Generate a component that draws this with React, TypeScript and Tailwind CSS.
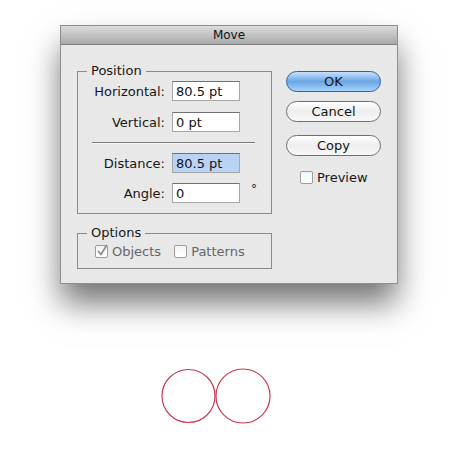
import React from 'react'

const font = { fontFamily: '"DejaVu Sans", "Liberation Sans", sans-serif' }

function Field({ label, value, selected, unit }: { label: string; value: string; selected?: boolean; unit?: string }) {
  return (
    <div className="flex items-center">
      <span className="w-[87px] text-right text-[13px] leading-none text-[#161616]">{label}</span>
      <div
        className={`ml-[7px] flex h-[20px] w-[68px] items-center border border-[#a6a6a6] border-t-[#707070] pl-[3px] text-[13px] leading-none text-[#111] ${
          selected ? 'bg-[#b9d3f5]' : 'bg-white'
        }`}
      >
        {value}
      </div>
      {unit && <span className="ml-[11px] -mt-[8px] text-[12px] leading-none text-[#222]">{unit}</span>}
    </div>
  )
}

function Check({ checked, label, disabled }: { checked?: boolean; label: string; disabled?: boolean }) {
  return (
    <div className="flex items-center">
      <div className="relative h-[13px] w-[13px] rounded-[2px] border border-[#9c9c9c] bg-gradient-to-b from-[#f4f4f4] to-[#ffffff]">
        {checked && (
          <svg className="absolute -left-[1px] -top-[3px]" width="15" height="15" viewBox="0 0 15 15">
            <path d="M3.5 8.5 L6 11.5 L11.5 2.5" fill="none" stroke="#8d8d8d" strokeWidth="1.8" strokeLinecap="round" strokeLinejoin="round" />
          </svg>
        )}
      </div>
      <span className={`ml-[4px] text-[13px] leading-none ${disabled ? 'text-[#666]' : 'text-[#161616]'}`}>{label}</span>
    </div>
  )
}

function AquaButton({ label, primary }: { label: string; primary?: boolean }) {
  return (
    <div
      className={`flex h-[21px] w-[95px] items-center justify-center rounded-full border text-[13px] leading-none text-[#151515] ${
        primary
          ? 'border-[#33609e] bg-gradient-to-b from-[#c8e1fb] via-[#6aa6e6] to-[#a6d3fb]'
          : 'border-[#6f6f6f] bg-gradient-to-b from-[#ffffff] via-[#eeeeee] to-[#f8f8f8]'
      }`}
    >
      {label}
    </div>
  )
}

export default function App() {
  return (
    <div className="flex min-h-[465px] w-[457px] flex-col bg-white pl-[61px] pt-[26px]" style={font}>
      {/* Move dialog */}
      <div className="w-[336px] bg-[#e8e8e8] shadow-[0_0_0_1px_#8e8e8e,0_20px_30px_rgba(0,0,0,0.55)]">
        <div className="flex h-[19px] items-center justify-center border-b border-[#7e7e7e] bg-gradient-to-b from-[#dcdcdc] to-[#a9a9a9] text-[12px] leading-none text-[#111]">
          Move
        </div>

        <div className="flex pl-[16px] pt-[19px] pb-[14px]">
          <div className="flex w-[195px] flex-col">
            {/* Position */}
            <fieldset className="border border-[#8a8a8a] px-0 pb-[10px]">
              <legend className="ml-[9px] px-[4px] text-[13px] leading-[14px] text-[#161616]">Position</legend>
              <div className="mt-[3px] flex flex-col">
                <Field label="Horizontal:" value="80.5 pt" />
                <div className="mt-[11px]">
                  <Field label="Vertical:" value="0 pt" />
                </div>
                <div className="ml-[14px] mt-[10px] w-[163px] border-t border-b border-t-[#7a7a7a] border-b-[#f6f6f6]" />
                <div className="mt-[9px]">
                  <Field label="Distance:" value="80.5 pt" selected />
                </div>
                <div className="mt-[10px]">
                  <Field label="Angle:" value="0" unit="°" />
                </div>
              </div>
            </fieldset>

            {/* Options */}
            <fieldset className="mt-[12px] border border-[#8a8a8a] px-0 pb-[10px]">
              <legend className="ml-[9px] px-[4px] text-[13px] leading-[14px] text-[#161616]">Options</legend>
              <div className="ml-[17px] mt-[5px] flex items-center">
                <Check checked label="Objects" disabled />
                <div className="ml-[13px]">
                  <Check label="Patterns" disabled />
                </div>
              </div>
            </fieldset>
          </div>

          <div className="ml-[14px] mt-[7px] flex flex-col">
            <AquaButton label="OK" primary />
            <div className="mt-[9px]">
              <AquaButton label="Cancel" />
            </div>
            <div className="mt-[13px]">
              <AquaButton label="Copy" />
            </div>
            <div className="ml-[14px] mt-[15px]">
              <Check label="Preview" />
            </div>
          </div>
        </div>
      </div>

      {/* artwork */}
      <svg className="ml-[100px] mt-[85px]" width="112" height="58" viewBox="0 0 112 58">
        <circle cx="27.5" cy="28" r="26.5" fill="none" stroke="#c63a52" strokeWidth="1.2" />
        <circle cx="82" cy="28" r="27" fill="none" stroke="#c63a52" strokeWidth="1.2" />
      </svg>
    </div>
  )
}
